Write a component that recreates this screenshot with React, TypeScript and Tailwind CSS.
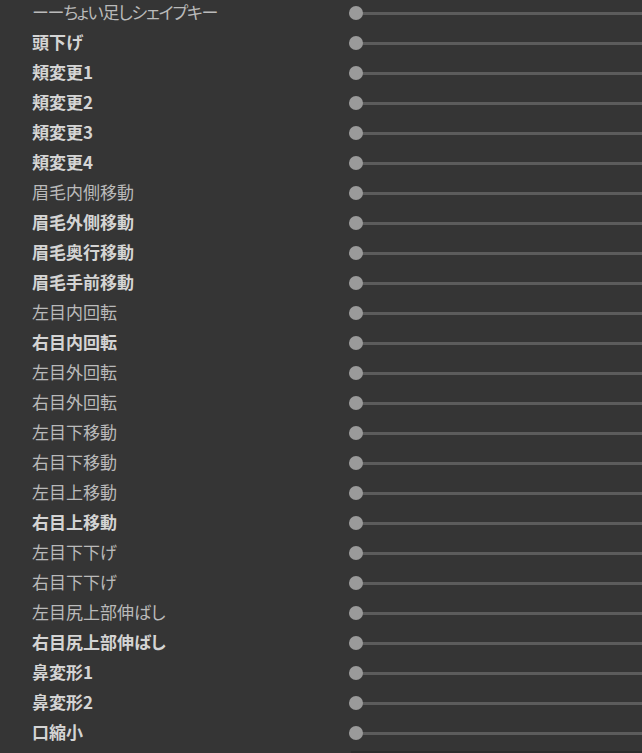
import React from 'react';

type Row = { label: string; bold?: boolean; tight?: boolean };

const rows: Row[] = [
  { label: 'ーーちょい足しシェイプキー', tight: true },
  { label: '頭下げ', bold: true },
  { label: '頬変更1', bold: true },
  { label: '頬変更2', bold: true },
  { label: '頬変更3', bold: true },
  { label: '頬変更4', bold: true },
  { label: '眉毛内側移動' },
  { label: '眉毛外側移動', bold: true },
  { label: '眉毛奥行移動', bold: true },
  { label: '眉毛手前移動', bold: true },
  { label: '左目内回転' },
  { label: '右目内回転', bold: true },
  { label: '左目外回転' },
  { label: '右目外回転' },
  { label: '左目下移動' },
  { label: '右目下移動' },
  { label: '左目上移動' },
  { label: '右目上移動', bold: true },
  { label: '左目下下げ' },
  { label: '右目下下げ' },
  { label: '左目尻上部伸ばし' },
  { label: '右目尻上部伸ばし', bold: true },
  { label: '鼻変形1', bold: true },
  { label: '鼻変形2', bold: true },
  { label: '口縮小', bold: true },
];

const SliderRow: React.FC<{ row: Row }> = ({ row }) => (
  <div className="flex h-[30px] items-center">
    <div
      className={`w-[349px] shrink-0 pb-[3px] pl-[32px] text-[17px] leading-none whitespace-nowrap [font-feature-settings:'palt'] ${
        row.bold ? 'font-semibold text-[#d4d4d4]' : 'font-normal text-[#bababa]'
      } ${row.tight ? 'tracking-[-1.2px]' : ''}`}
    >
      {row.label}
    </div>
    <div className="relative flex h-[14px] flex-1 items-center">
      <div className="h-[3px] w-full bg-[#5c5c5c]" />
      <div className="absolute left-0 top-0 h-[14px] w-[14px] rounded-full bg-[#9a9a9a]" />
    </div>
  </div>
);

export default function App() {
  return (
    <div
      className="h-[753px] w-[642px] overflow-hidden bg-[#353535]"
      style={{ fontFamily: '"Noto Sans CJK JP", "Noto Sans", sans-serif' }}
    >
      <div className="-mt-[2px] flex flex-col">
        {rows.map((r) => (
          <SliderRow key={r.label} row={r} />
        ))}
        <div className="ml-[351px] mt-[3px] h-[4px] bg-[#2c2c2c]" />
      </div>
    </div>
  );
}
